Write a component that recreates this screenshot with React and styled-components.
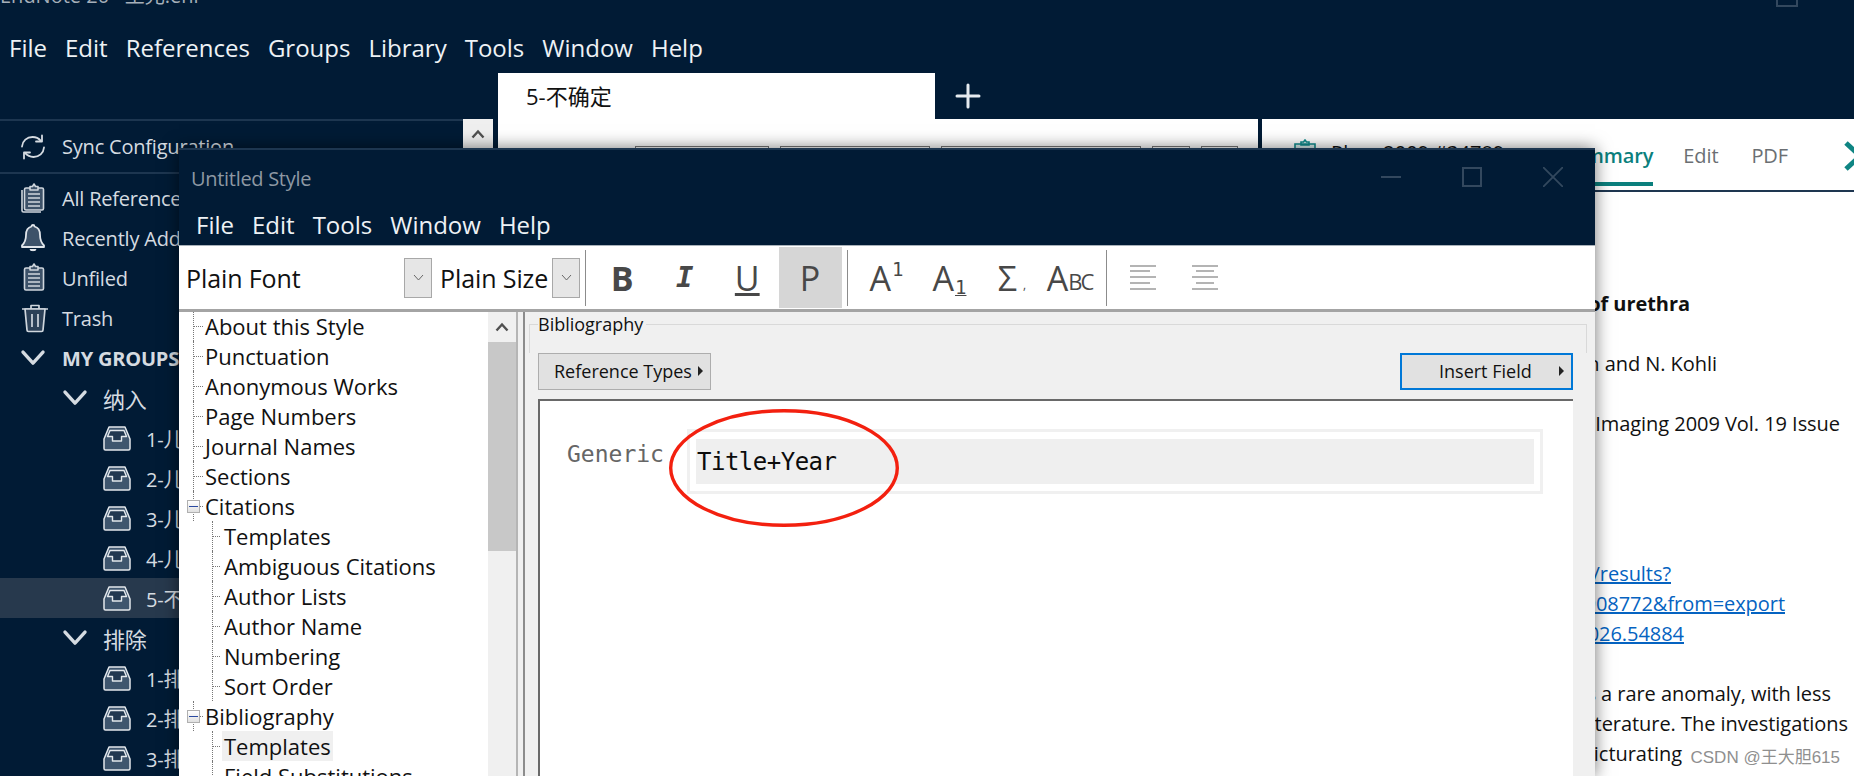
import React from "react"
import styled, { createGlobalStyle } from "styled-components"

const NAVY = "#011b35"
const UI_FONT = `"Open Sans", "Noto Sans CJK SC", sans-serif`

const GlobalStyle = createGlobalStyle`
  html, body {
    margin: 0;
    padding: 0;
    background: ${NAVY};
    font-family: ${UI_FONT};
  }
`

const mainMenu = ["File", "Edit", "References", "Groups", "Library", "Tools", "Window", "Help"]
const styleMenu = ["File", "Edit", "Tools", "Window", "Help"]

const treeRows = [
  { label: "About this Style", level: 1 },
  { label: "Punctuation", level: 1 },
  { label: "Anonymous Works", level: 1 },
  { label: "Page Numbers", level: 1 },
  { label: "Journal Names", level: 1 },
  { label: "Sections", level: 1 },
  { label: "Citations", level: 1, open: true },
  { label: "Templates", level: 2 },
  { label: "Ambiguous Citations", level: 2 },
  { label: "Author Lists", level: 2 },
  { label: "Author Name", level: 2 },
  { label: "Numbering", level: 2 },
  { label: "Sort Order", level: 2 },
  { label: "Bibliography", level: 1, open: true },
  { label: "Templates", level: 2, selected: true },
  { label: "Field Substitutions", level: 2 },
]

const SyncIcon = () => (
  <svg width="26" height="26" viewBox="0 0 26 26" fill="none" stroke="#d5dbe1" strokeWidth="1.8" strokeLinecap="round" strokeLinejoin="round">
    <path d="M2 12.5C2.4 7 7 3 12.5 3c3.4 0 6.3 1.4 8.3 3.8" />
    <path d="M22 1.5v6h-6" />
    <path d="M24 13.5c-.4 5.5-5 9.5-10.5 9.5-3.4 0-6.300-1.400-8.300-3.800" />
    <path d="M4 24.500v-6h6" />
  </svg>
)

const ClipIcon = ({ stacked }) => (
  <svg width="26" height="30" viewBox="0 0 26 30" fill="none" stroke="#cfd6dd" strokeWidth="1.6" strokeLinejoin="round">
    {stacked && <path d="M2 7v20.500c0 .8.700 1.500 1.500 1.500H21" />}
    <rect x="4.500" y="5" width="19" height="22" rx="1.500" fill="#3d5269" />
    <path d="M10 5V3.500h2.500L14 1l1.500 2.500H18V7h-8z" fill="#3d5269" />
    <path d="M8 11h12M8 15h12M8 19h12M8 23h12" />
  </svg>
)

const BellIcon = () => (
  <svg width="26" height="30" viewBox="0 0 26 30">
    <path d="M13 2c1 0 1.500.7 1.500 1.500C18.500 4.500 20 8 20 12c0 5 1.500 8 4 10.500v1.500H2v-1.500C4.500 20 6 17 6 12c0-4 1.500-7.500 5.500-8.500C11.500 2.700 12 2 13 2z" fill="#3d5269" stroke="#dfe4e9" strokeWidth="1.800" strokeLinejoin="round" />
    <path d="M9.500 26h7l-1 1.800c-.8.500-4.200.500-5 0z" fill="#dfe4e9" />
  </svg>
)

const TrashIcon = () => (
  <svg width="30" height="30" viewBox="0 0 30 30" fill="none" stroke="#cfd6dd" strokeWidth="1.700" strokeLinejoin="round">
    <path d="M2 6h26M11 6V2.500h8V6" />
    <path d="M5 6l2 21c0 1 .8 1.500 1.500 1.500h13c.7 0 1.500-.5 1.500-1.500l2-21z" fill="#2c4158" />
    <path d="M12 11v13M18 11v13" />
  </svg>
)

const TrayIcon = () => (
  <svg width="28" height="25" viewBox="0 0 28 25">
    <path d="M6 1h16l5 12v9.500c0 .8-.7 1.500-1.500 1.500h-23C1.700 24 1 23.300 1 22.500V13z" fill="#3f566e" stroke="#e3e8ec" strokeWidth="1.500" strokeLinejoin="round" />
    <path d="M7 4.500h14l2.500 6H18.500v4.500h-9v-4.500H4.500z" fill="#223850" stroke="#e3e8ec" strokeWidth="1.400" strokeLinejoin="round" />
  </svg>
)

const Chevron = ({ size = 26, width = 3.4 }) => (
  <svg width={size} height={size * 0.7} viewBox="0 0 26 18" fill="none" stroke="#d5dbe1" strokeWidth={width} strokeLinecap="round" strokeLinejoin="round">
    <path d="M3 3l10 11L23 3" />
  </svg>
)

const SmallUp = () => (
  <svg width="14" height="10" viewBox="0 0 14 10" fill="none" stroke="#505050" strokeWidth="2.400">
    <path d="M1.500 8.500L7 2.500l5.500 6" />
  </svg>
)

const SmallDown = () => (
  <svg width="11" height="7" viewBox="0 0 11 7" fill="none" stroke="#666" strokeWidth="1">
    <path d="M1 1l4.500 5L10 1" />
  </svg>
)

const AlignIcon = ({ center }) => (
  <svg width="28" height="27" viewBox="0 0 28 27" stroke="#b4b4b4" strokeWidth="2">
    <path d="M1 2h26" />
    <path d={center ? "M5 7h18" : "M1 7h20"} />
    <path d="M1 13h26" />
    <path d={center ? "M5 19h18" : "M1 19h20"} />
    <path d="M1 25h26" />
  </svg>
)

const SideRow = ({ icon, children, bold }) => (
  <Row>
    <RowIcon>{icon}</RowIcon>
    <RowLabel $bold={bold}>{children}</RowLabel>
  </Row>
)

const GroupRow = ({ name }) => (
  <SubRow>
    <GroupChevron><Chevron /></GroupChevron>
    <GroupName>{name}</GroupName>
  </SubRow>
)

const FolderRow = ({ name, active }) => (
  <FolderLine $active={active}>
    <TrayIcon />
    <RowLabel>{name}</RowLabel>
  </FolderLine>
)

const App = () => {
  return (
    <Page>
      <GlobalStyle />
      <TitleBar>
        <AppTitle>EndNote 20 &nbsp; 王允.enl</AppTitle>
        <RestoreIcon />
      </TitleBar>
      <MenuBar>
        {mainMenu.map(m => <MenuItem key={m}>{m}</MenuItem>)}
      </MenuBar>
      <TabStrip>
        <LibraryTab>5-不确定</LibraryTab>
        <PlusMark>
          <svg width="26" height="26" viewBox="0 0 26 26" stroke="#e6ebef" strokeWidth="3" strokeLinecap="round">
            <path d="M13 2v22M2 13h22" />
          </svg>
        </PlusMark>
      </TabStrip>

      <Workspace>
        <Sidebar>
          <SyncRow>
            <RowIcon><SyncIcon /></RowIcon>
            <RowLabel>Sync Configuration</RowLabel>
          </SyncRow>
          <SideRow icon={<ClipIcon stacked />}>All References</SideRow>
          <SideRow icon={<BellIcon />}>Recently Added</SideRow>
          <SideRow icon={<ClipIcon />}>Unfiled</SideRow>
          <SideRow icon={<TrashIcon />}>Trash</SideRow>
          <SideRow icon={<Chevron />} bold>MY GROUPS</SideRow>
          <GroupRow name="纳入" />
          <FolderRow name="1-儿童" />
          <FolderRow name="2-儿童" />
          <FolderRow name="3-儿童" />
          <FolderRow name="4-儿童" />
          <FolderRow name="5-不确定" active />
          <GroupRow name="排除" />
          <FolderRow name="1-排除" />
          <FolderRow name="2-排除" />
          <FolderRow name="3-排除" />
        </Sidebar>
        <SideScroll>
          <ScrollButton><SmallUp /></ScrollButton>
        </SideScroll>

        <CenterPane>
          <SearchRow>
            <SearchBox $w={134} />
            <SearchBox $w={150} />
            <SearchBox $w={200} />
            <SearchBox $w={38} />
            <SearchBox $w={37} />
          </SearchRow>
        </CenterPane>

        <DetailPane>
          <DetailHead>
            <DetailIcon>
              <svg width="24" height="26" viewBox="0 0 24 26" fill="#d9eeee" stroke="#0f8b8d" strokeWidth="1.600">
                <path d="M8 3h2.500L12 1l1.500 2H16v3H8zM2 5h20v20H2z" />
              </svg>
            </DetailIcon>
            <DetailName>Rhee 2009 #34789</DetailName>
            <DetailTab $active>Summary</DetailTab>
            <DetailTab>Edit</DetailTab>
            <DetailTab>PDF</DetailTab>
            <CollapseArrow>
              <svg width="26" height="30" viewBox="0 0 26 30" fill="none" stroke="#0f8583" strokeWidth="5" strokeLinejoin="round">
                <path d="M3 2l14 13L3 28" />
              </svg>
            </CollapseArrow>
          </DetailHead>
          <DetailBody>
            <TextLine $end={1690} $bold>Congenital duplication of urethra</TextLine>
            <Blank />
            <TextLine $end={1717}>A. Rhee, S. Singh and N. Kohli</TextLine>
            <Blank />
            <TextLine $end={1840}>Indian J Radiol Imaging 2009 Vol. 19 Issue</TextLine>
            <Blank $n={4} />
            <LinkLine $end={1671}>https://pubmed.ncbi.nlm.nih.gov/results?</LinkLine>
            <LinkLine $end={1785}>term=19908772&amp;from=export</LinkLine>
            <LinkLine $end={1684}>doi:10.4103/0971-3026.54884</LinkLine>
            <Blank />
            <TextLine $end={1831}>Urethral duplication is a rare anomaly, with less</TextLine>
            <TextLine $end={1848}>than 200 cases in the literature. The investigations</TextLine>
            <TextLine $end={1682}>included micturating</TextLine>
            <TextLine $end={1810}>cystourethrogram and ultrasound</TextLine>
          </DetailBody>
        </DetailPane>
      </Workspace>

      <StyleWindow>
        <WindowHead>
          <WindowTitle>Untitled Style</WindowTitle>
          <WindowButtons>
            <svg width="20" height="20" viewBox="0 0 20 20" stroke="#33485e" strokeWidth="2"><path d="M0 10h20" /></svg>
            <svg width="20" height="20" viewBox="0 0 20 20" fill="none" stroke="#33485e" strokeWidth="2"><rect x="1" y="1" width="18" height="18" /></svg>
            <svg width="20" height="20" viewBox="0 0 20 20" stroke="#33485e" strokeWidth="1.800"><path d="M0 0l20 20M20 0L0 20" /></svg>
          </WindowButtons>
        </WindowHead>
        <WindowMenu>
          {styleMenu.map(m => <WindowMenuItem key={m}>{m}</WindowMenuItem>)}
        </WindowMenu>

        <Toolbar>
          <FontName $w={218}>Plain Font</FontName>
          <DropButton><SmallDown /></DropButton>
          <FontName $w={112} $gap={8}>Plain Size</FontName>
          <DropButton><SmallDown /></DropButton>
          <ToolDivider />
          <ToolGlyph $w={62.5} $bold>B</ToolGlyph>
          <ToolGlyph $w={62.5} $italic>I</ToolGlyph>
          <ToolGlyph $w={62.5} $under>U</ToolGlyph>
          <ToolGlyph $w={63} $active>P</ToolGlyph>
          <ToolDivider />
          <ToolGlyph $nudge={6}>A<Sup>1</Sup></ToolGlyph>
          <ToolGlyph $nudge={8}>A<Sub>1</Sub></ToolGlyph>
          <ToolGlyph $nudge={9}>Σ<Tiny>,</Tiny></ToolGlyph>
          <ToolGlyph>A<SmallCap>BC</SmallCap></ToolGlyph>
          <ToolDivider />
          <ToolGlyph><AlignIcon /></ToolGlyph>
          <ToolGlyph><AlignIcon center /></ToolGlyph>
        </Toolbar>

        <WindowBody>
          <TreePane>
            <Tree>
              {treeRows.map((r, i) => (
                <TreeRow key={i} $level={r.level}>
                  {r.open && <Expander />}
                  <TreeLabel $selected={r.selected}>{r.label}</TreeLabel>
                </TreeRow>
              ))}
            </Tree>
            <TreeScroll>
              <TreeScrollUp><SmallUp /></TreeScrollUp>
              <TreeThumb />
            </TreeScroll>
          </TreePane>

          <EditorPane>
            <GroupFrame>
              <GroupLabel>Bibliography</GroupLabel>
            </GroupFrame>
            <ButtonRow>
              <PlainButton>
                Reference Types
                <Caret />
              </PlainButton>
              <FocusButton>
                Insert Field
                <Caret />
              </FocusButton>
            </ButtonRow>
            <Editor>
              <EditorLine>
                <TypeName>Generic</TypeName>
                <FieldFrame>
                  <FieldInner>Title+Year</FieldInner>
                </FieldFrame>
              </EditorLine>
              <RedMark viewBox="0 0 230 118" fill="none">
                <ellipse cx="115" cy="59" rx="113.300" ry="57.300" stroke="#f3200f" strokeWidth="3.400" />
              </RedMark>
            </Editor>
          </EditorPane>
        </WindowBody>
      </StyleWindow>

      <Watermark>CSDN @王大胆615</Watermark>
    </Page>
  )
}

export default App

const Page = styled.div`
  position: relative;
  width: 100%;
  height: 100vh;
  overflow: hidden;
  background: ${NAVY};
  color: #e8edf2;
  font-family: ${UI_FONT};
`

const TitleBar = styled.div`
  height: 6px;
  margin-bottom: 22px;
  padding: 0 56px 0 0;
  display: flex;
  align-items: flex-end;
  justify-content: space-between;
`

const AppTitle = styled.span`
  font-size: 20px;
  line-height: 20px;
  color: #a5afb9;
  white-space: nowrap;
`

const RestoreIcon = styled.span`
  width: 18px;
  height: 10px;
  border: 2px solid #33485e;
  border-top: 0;
  margin-bottom: -1px;
`

const MenuBar = styled.nav`
  height: 40px;
  box-sizing: border-box;
  padding: 0 0 2px 9px;
  display: flex;
  align-items: center;
  gap: 18px;
`

const MenuItem = styled.span`
  font-size: 24px;
  color: #eef2f5;
`

const TabStrip = styled.div`
  height: 46px;
  margin-top: 5px;
  padding-left: 498px;
  display: flex;
`

const LibraryTab = styled.div`
  width: 409px;
  height: 46px;
  padding: 7px 0 0 28px;
  background: #fff;
  color: #111;
  font-size: 22px;
  line-height: 32px;
`

const PlusMark = styled.div`
  margin-left: 20px;
  padding-top: 10px;
`

const Workspace = styled.div`
  display: flex;
  height: calc(100vh - 119px);
`

const Sidebar = styled.aside`
  width: 463px;
  border-top: 2px solid #1d3650;
  color: #d5dbe1;
`

const SyncRow = styled.div`
  height: 51px;
  padding-left: 20px;
  display: flex;
  align-items: center;
  border-bottom: 2px solid #1d3650;
  margin-bottom: 4px;
`

const Row = styled.div`
  height: 40px;
  padding-left: 20px;
  display: flex;
  align-items: center;
`

const SubRow = styled(Row)`
  padding-left: 62px;
`

const FolderLine = styled(Row)`
  padding-left: 103px;
  gap: 15px;
  background: ${p => (p.$active ? "#27394d" : "transparent")};
`

const RowIcon = styled.span`
  width: 42px;
  display: flex;
  align-items: center;
`

const GroupChevron = styled.span`
  width: 41px;
  display: flex;
  align-items: center;
`

const RowLabel = styled.span`
  font-size: 20px;
  letter-spacing: -0.2px;
  white-space: nowrap;
  font-weight: ${p => (p.$bold ? 700 : 400)};
`

const GroupName = styled(RowLabel)`
  font-size: 22px;
`

const SideScroll = styled.div`
  width: 30px;
`

const ScrollButton = styled.div`
  height: 29px;
  background: #efefef;
  display: flex;
  align-items: center;
  justify-content: center;
`

const CenterPane = styled.main`
  width: 760px;
  margin-left: 5px;
  background: #fff;
`

const SearchRow = styled.div`
  padding: 27px 0 0 137px;
  display: flex;
  gap: 11px;
`

const SearchBox = styled.div`
  width: ${p => p.$w}px;
  height: 30px;
  border: 1px solid #777;
  box-sizing: border-box;
`

const DetailPane = styled.section`
  flex: 1;
  min-width: 0;
  margin-left: 4px;
  background: #fff;
  color: #111;
  overflow: hidden;
`

const DetailHead = styled.header`
  height: 71px;
  border-bottom: 2px solid #1e3650;
  display: flex;
  align-items: flex-start;
`

const DetailIcon = styled.span`
  margin: 20px 0 0 31px;
`

const DetailName = styled.span`
  margin: 20px 0 0 14px;
  font-size: 20px;
  line-height: 28px;
  white-space: nowrap;
  flex: 1;
`

const DetailTab = styled.span`
  height: 67px;
  box-sizing: border-box;
  margin-right: ${p => (p.$active ? 30 : 33)}px;
  padding-top: 23px;
  font-size: 20px;
  line-height: 28px;
  letter-spacing: -0.1px;
  color: ${p => (p.$active ? "#0b7f7d" : "#6b6f73")};
  font-weight: ${p => (p.$active ? 600 : 400)};
  border-bottom: ${p => (p.$active ? "4px solid #0b7f7d" : "none")};
`

const CollapseArrow = styled.span`
  width: 32px;
  margin: 22px -21px 0 22px;
`

const DetailBody = styled.div`
  padding-top: 97px;
  font-size: 20px;
`

const TextLine = styled.div`
  height: 30px;
  line-height: 30px;
  white-space: nowrap;
  display: flex;
  justify-content: flex-end;
  padding-right: ${p => 1854 - p.$end}px;
  letter-spacing: -0.05px;
  font-weight: ${p => (p.$bold ? 700 : 400)};
`

const LinkLine = styled(TextLine)`
  color: #0563c1;
  text-decoration: underline;
`

const Blank = styled.div`
  height: ${p => (p.$n || 1) * 30}px;
`

const StyleWindow = styled.div`
  position: absolute;
  left: 179px;
  top: 148px;
  bottom: 0;
  width: 1416px;
  display: flex;
  flex-direction: column;
  background: ${NAVY};
  border-top: 2px solid #1d3650;
  box-sizing: border-box;
  box-shadow: 0 0 16px rgba(0, 0, 0, 0.55);
`

const WindowHead = styled.div`
  height: 55px;
  box-sizing: border-box;
  padding: 2px 32px 0 12px;
  display: flex;
  align-items: center;
  justify-content: space-between;
`

const WindowTitle = styled.span`
  font-size: 20px;
  letter-spacing: -0.3px;
  color: #8d98a3;
`

const WindowButtons = styled.div`
  display: flex;
  gap: 61px;
  margin-top: -4px;
`

const WindowMenu = styled.nav`
  height: 38px;
  margin-bottom: 2px;
  padding-left: 17px;
  display: flex;
  align-items: center;
  gap: 18px;
`

const WindowMenuItem = styled.span`
  font-size: 24px;
  color: #eef2f5;
`

const Toolbar = styled.div`
  height: 64px;
  background: #fff;
  border-top: 1px solid #a9b2ba;
  box-sizing: border-box;
  padding-left: 7px;
  display: flex;
  align-items: center;
  color: #111;
`

const FontName = styled.span`
  width: ${p => p.$w}px;
  margin: 1px 0 0 ${p => p.$gap || 0}px;
  font-size: 25px;
  letter-spacing: -0.1px;
  white-space: nowrap;
`

const DropButton = styled.span`
  width: 28px;
  height: 40px;
  box-sizing: border-box;
  background: #e6e6e6;
  border: 1px solid #a8a8a8;
  display: flex;
  align-items: center;
  justify-content: center;
`

const ToolDivider = styled.span`
  width: 1px;
  height: 56px;
  background: #8c8c8c;
  margin: 0 5px;
`

const ToolGlyph = styled.span`
  width: ${p => p.$w || 62}px;
  height: 61px;
  box-sizing: border-box;
  padding-left: ${p => p.$nudge || 0}px;
  display: flex;
  align-items: center;
  justify-content: center;
  font-size: ${p => (p.$italic ? 29 : 34)}px;
  line-height: 1;
  color: #484848;
  font-family: ${p => (p.$italic ? `"DejaVu Sans Mono", monospace` : `"Open Sans", sans-serif`)};
  font-weight: ${p => (p.$bold || p.$italic ? 700 : 400)};
  font-style: ${p => (p.$italic ? "italic" : "normal")};
  text-decoration: ${p => (p.$under ? "underline" : "none")};
  background: ${p => (p.$active ? "#d6d6d6" : "transparent")};
`

const Sup = styled.span`
  font-family: "DejaVu Sans Mono", monospace;
  font-size: 19px;
  margin: -16px 0 0 1px;
`

const Sub = styled(Sup)`
  margin: 20px 0 0 1px;
  text-decoration: underline;
`

const Tiny = styled.span`
  font-size: 12px;
  margin: 14px 0 0 6px;
`

const SmallCap = styled.span`
  font-size: 22px;
  letter-spacing: -2px;
  margin-top: 7px;
`

const WindowBody = styled.div`
  flex: 1;
  min-height: 0;
  display: flex;
  background: #f0f0f0;
  border-top: 3px solid #a4a4a4;
`

const TreePane = styled.div`
  width: 339px;
  display: flex;
  background: #fff;
  border-right: 2px solid #b5b5b5;
  box-sizing: border-box;
  overflow: hidden;
`

const Tree = styled.div`
  flex: 1;
  margin-top: -1px;
`

const TreeRow = styled.div`
  position: relative;
  height: 30px;
  padding-left: ${p => (p.$level === 1 ? 24 : 43)}px;
  display: flex;
  align-items: center;
  font-size: 22px;
  color: #111;
  white-space: nowrap;

  &::before {
    content: "";
    position: absolute;
    left: ${p => (p.$level === 1 ? 14 : 33)}px;
    top: 15px;
    width: ${p => (p.$level === 1 ? 10 : 8)}px;
    border-top: 1px dotted #777;
  }
  &::after {
    content: "";
    position: absolute;
    left: ${p => (p.$level === 1 ? 14 : 33)}px;
    top: 0;
    bottom: 0;
    border-left: 1px dotted #777;
  }
`

const Expander = styled.span`
  position: absolute;
  z-index: 1;
  left: 8px;
  top: 9px;
  width: 13px;
  height: 13px;
  box-sizing: border-box;
  border: 1px solid #b0b0b0;
  background: linear-gradient(#fff, #e0e0e0);
  display: flex;
  align-items: center;
  justify-content: center;

  &::after {
    content: "";
    width: 9px;
    height: 1px;
    background: #2a4aa0;
  }
`

const TreeLabel = styled.span`
  padding: 0 2px;
  line-height: 30px;
  background: ${p => (p.$selected ? "#f0f0f0" : "transparent")};
`

const TreeScroll = styled.div`
  width: 28px;
  background: #f0f0f0;
`

const TreeScrollUp = styled.div`
  height: 30px;
  display: flex;
  align-items: center;
  justify-content: center;
`

const TreeThumb = styled.div`
  height: 209px;
  background: #c8c8c8;
`

const EditorPane = styled.div`
  position: relative;
  flex: 1;
  margin-left: 5px;
  padding: 0 22px 0 13px;
  border-left: 2px solid #8c8c8c;
  display: flex;
  flex-direction: column;
  overflow: hidden;
`

const GroupFrame = styled.div`
  height: 29px;
  margin: 12px -14px 0 -9px;
  padding-left: 8px;
  border-top: 1px solid #d9d9d9;
  border-left: 1px solid #d9d9d9;
  border-right: 1px solid #d9d9d9;
  box-sizing: border-box;
`

const GroupLabel = styled.span`
  display: inline-block;
  margin-top: -13px;
  padding-right: 3px;
  vertical-align: top;
  background: #f0f0f0;
  color: #111;
  font-size: 18px;
  line-height: 24px;
`

const ButtonRow = styled.div`
  height: 37px;
  display: flex;
  justify-content: space-between;
`

const PlainButton = styled.div`
  width: 173px;
  box-sizing: border-box;
  padding: 0 0 2px 15px;
  background: #e1e1e1;
  border: 1px solid #adadad;
  color: #111;
  font-size: 18px;
  display: flex;
  align-items: center;
  white-space: nowrap;
`

const FocusButton = styled(PlainButton)`
  padding-left: 37px;
  border: 2px solid #0078d7;
`

const Caret = styled.span`
  margin-left: auto;
  margin-right: 7px;
  border-left: 5px solid #222;
  border-top: 5px solid transparent;
  border-bottom: 5px solid transparent;
`

const Editor = styled.div`
  position: relative;
  flex: 1;
  margin-top: 9px;
  background: #fff;
  border-top: 2px solid #696969;
  border-left: 2px solid #696969;
`

const EditorLine = styled.div`
  padding: 28px 0 0 27px;
  display: flex;
  align-items: flex-start;
`

const TypeName = styled.span`
  width: 120px;
  margin-top: 10px;
  font-family: "DejaVu Sans Mono", monospace;
  font-size: 23px;
  line-height: 30px;
  color: #666;
`

const FieldFrame = styled.div`
  width: 856px;
  height: 65px;
  padding: 7px 6px;
  box-sizing: border-box;
  border: 3px solid #f0f0f0;
`

const FieldInner = styled.div`
  height: 45px;
  padding-left: 1px;
  background: #efefef;
  color: #0c0c0c;
  font-family: "DejaVu Sans Mono", monospace;
  font-size: 24px;
  line-height: 46px;
  letter-spacing: -0.5px;
`

const RedMark = styled.svg`
  position: absolute;
  left: 129px;
  top: 8px;
  width: 230px;
  height: 118px;
`

const Watermark = styled.div`
  position: absolute;
  right: 14px;
  top: 746px;
  font-family: "Liberation Sans", "Noto Sans CJK SC", sans-serif;
  font-size: 17px;
  line-height: 24px;
  color: #8f8f8f;
  white-space: nowrap;
`
